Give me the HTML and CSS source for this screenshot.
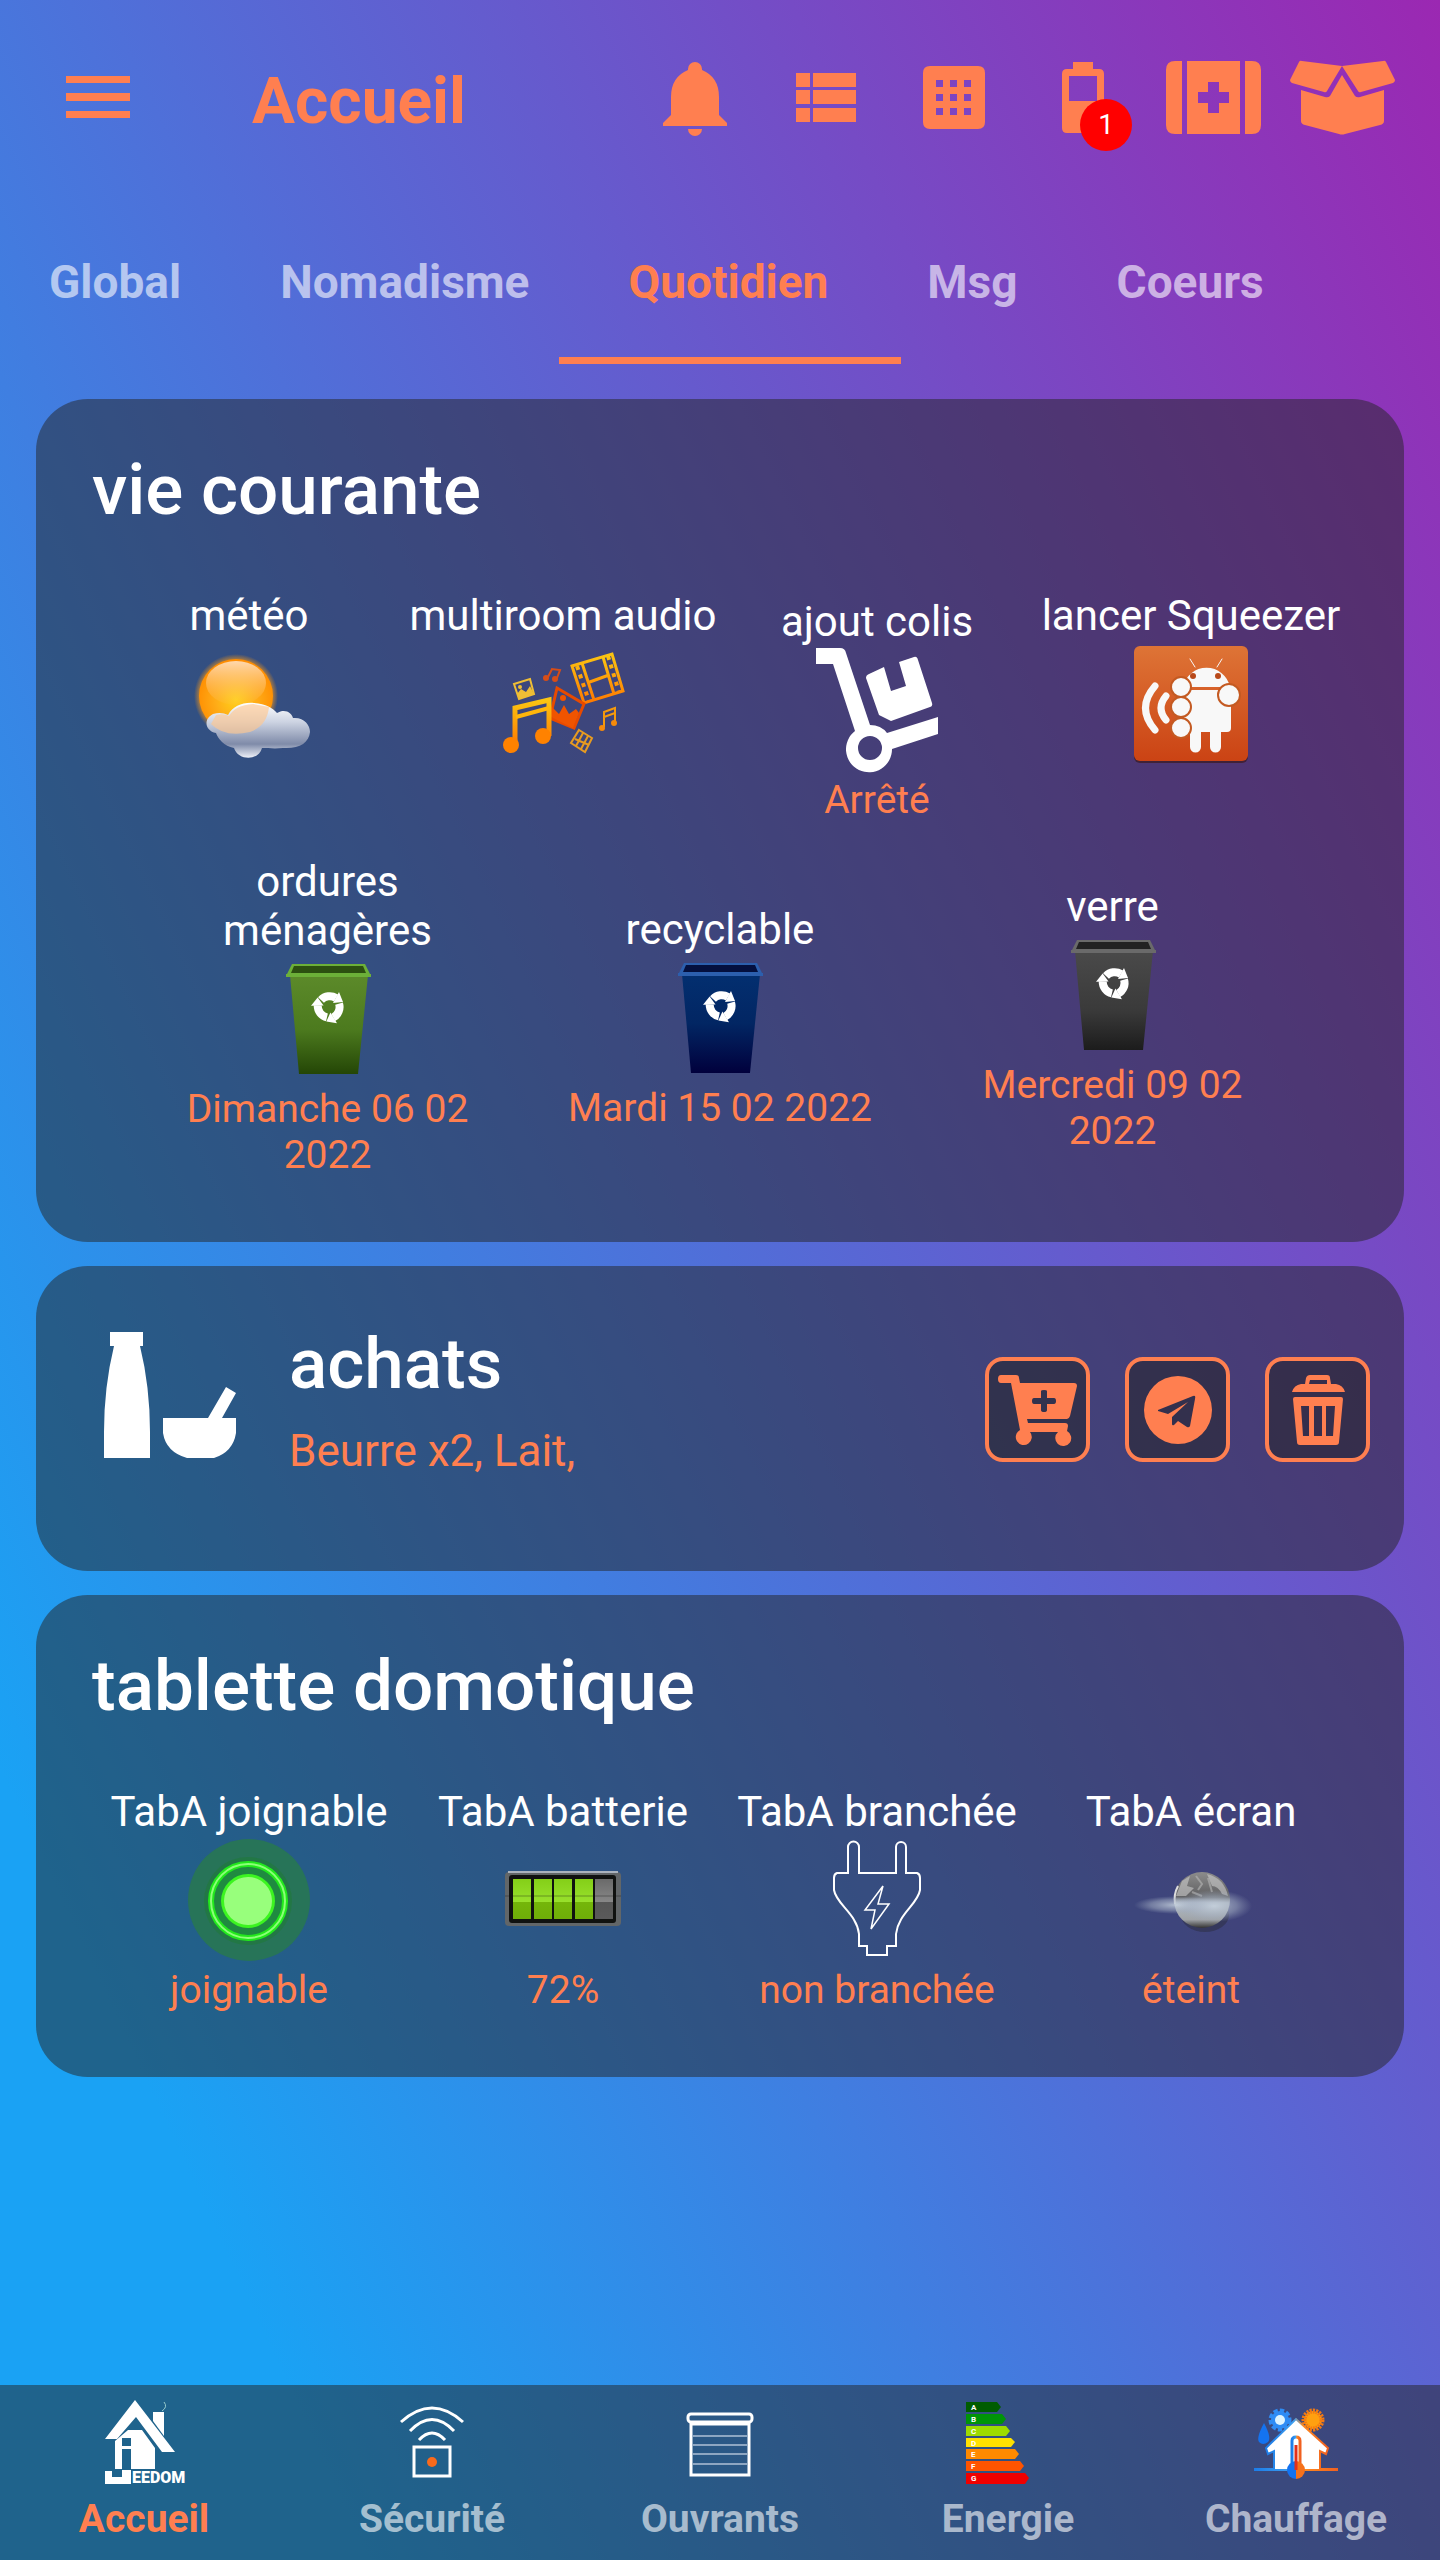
FILE: index.html
```html
<!DOCTYPE html>
<html lang="fr">
<head>
<meta charset="utf-8">
<meta name="viewport" content="width=device-width, initial-scale=1">
<title>Accueil</title>
<link rel="stylesheet" href="styles.css">
</head>
<body>
<svg class="defs" width="0" height="0" aria-hidden="true">
  <defs>
    <linearGradient id="binGreen" x1="0" y1="0" x2="0" y2="1"><stop offset="0" stop-color="#5c8a2a"/><stop offset=".55" stop-color="#4c7a1e"/><stop offset="1" stop-color="#244606"/></linearGradient>
    <linearGradient id="binBlue" x1="0" y1="0" x2="0" y2="1"><stop offset="0" stop-color="#032f70"/><stop offset=".5" stop-color="#022663"/><stop offset="1" stop-color="#01003c"/></linearGradient>
    <linearGradient id="binGrey" x1="0" y1="0" x2="0" y2="1"><stop offset="0" stop-color="#4a4a4a"/><stop offset=".6" stop-color="#3a3a3a"/><stop offset="1" stop-color="#1c1c1c"/></linearGradient>
    <symbol id="bin" viewBox="0 0 120 131">
      <path d="M22 20H100L90 119H31Z" fill="var(--bin-fill)"/>
      <path d="M24 9H97L103 21H18Z" fill="var(--bin-rim)"/>
      <path d="M26 11H95L98 18H23Z" fill="var(--bin-inside)"/>
      <path d="M18 19H103V22H18Z" fill="var(--bin-rim)"/>
      <g>
        <g id="arrow"><path d="M53 45A12 12 0 0 1 68 43" fill="none" stroke="#fff" stroke-width="8"/><path d="M71 37L75 47L65 48Z" fill="#fff"/></g>
        <use href="#arrow" transform="rotate(120 61 52)"/>
        <use href="#arrow" transform="rotate(240 61 52)"/>
      </g>
    </symbol>
    <radialGradient id="sun" cx=".5" cy=".55" r=".55"><stop offset="0" stop-color="#ffd21a"/><stop offset=".5" stop-color="#ffac17"/><stop offset="1" stop-color="#ff8c00"/></radialGradient>
    <linearGradient id="shine" x1="0" y1="0" x2="0" y2="1"><stop offset="0" stop-color="#ffe0c0" stop-opacity=".9"/><stop offset="1" stop-color="#ffc060" stop-opacity=".1"/></linearGradient>
    <linearGradient id="cloud" x1="0" y1="0" x2="0" y2="1"><stop offset="0" stop-color="#fff"/><stop offset=".35" stop-color="#ccd3e2"/><stop offset=".75" stop-color="#7f8ba9"/><stop offset="1" stop-color="#eef1f8"/></linearGradient>
    <radialGradient id="glow"><stop offset=".84" stop-color="#ff9a10" stop-opacity=".7"/><stop offset="1" stop-color="#ff9a10" stop-opacity="0"/></radialGradient>
    <linearGradient id="media" x1="0" y1="0" x2="0" y2="1"><stop offset="0" stop-color="#fbc512"/><stop offset="1" stop-color="#ff7a00"/></linearGradient>
    <linearGradient id="app" x1="0" y1="0" x2="0" y2="1"><stop offset="0" stop-color="#de7436"/><stop offset="1" stop-color="#cb4314"/></linearGradient>
    <linearGradient id="cell" x1="0" y1="0" x2="0" y2="1"><stop offset="0" stop-color="#84cf18"/><stop offset=".57" stop-color="#98e02c"/><stop offset=".58" stop-color="#74b60a"/><stop offset="1" stop-color="#6fae08"/></linearGradient>
    <linearGradient id="cellOff" x1="0" y1="0" x2="0" y2="1"><stop offset="0" stop-color="#6a6a6a"/><stop offset=".57" stop-color="#878787"/><stop offset=".58" stop-color="#565656"/><stop offset="1" stop-color="#5a5a5a"/></linearGradient>
    <linearGradient id="moon" x1="0" y1="0" x2="0" y2="1"><stop offset="0" stop-color="#8c8c8c"/><stop offset=".45" stop-color="#5e5e60"/><stop offset=".55" stop-color="#b4bcc4"/><stop offset=".85" stop-color="#a0a4a8"/><stop offset="1" stop-color="#333"/></linearGradient>
    <radialGradient id="mist"><stop offset="0" stop-color="#c6d2de" stop-opacity=".85"/><stop offset=".6" stop-color="#a8b4c6" stop-opacity=".5"/><stop offset="1" stop-color="#98a4ba" stop-opacity="0"/></radialGradient>
    <linearGradient id="house" x1="0" y1="0" x2="1" y2="0"><stop offset="0" stop-color="#1c7ce8"/><stop offset=".45" stop-color="#3fa0f0"/><stop offset=".6" stop-color="#ff8a20"/><stop offset="1" stop-color="#f06020"/></linearGradient>
  </defs>
</svg>

<header class="topbar">
  <button class="icon-button menu" type="button" aria-label="Menu">
    <svg width="64" height="48" viewBox="0 0 64 48"><path d="M0 0H64V7H0ZM0 17H64V25H0ZM0 35H64V42H0Z"/></svg>
  </button>
  <h1 class="topbar-title">Accueil</h1>
  <div class="actions">
    <button class="icon-button action" type="button" aria-label="Notifications">
      <svg width="130" height="90" viewBox="0 0 130 90"><path d="M60 15V14A7 7 0 0 1 74 14V15Q91 22 91 42V60L99 68V71H35V68L43 60V42Q43 22 60 15ZM60 74H74A7 7 0 0 1 60 74Z"/></svg>
    </button>
    <button class="icon-button action" type="button" aria-label="Liste">
      <svg width="130" height="90" viewBox="0 0 130 90"><path d="M38 18H52V32H38ZM55 18H98V32H55ZM38 35H52V49H38ZM55 35H98V49H55ZM38 53H52V67H38ZM55 53H98V67H55Z"/></svg>
    </button>
    <button class="icon-button action" type="button" aria-label="Clavier">
      <svg width="130" height="90" viewBox="0 0 130 90"><path fill-rule="evenodd" d="M42 11H90Q97 11 97 18V67Q97 74 90 74H42Q35 74 35 67V18Q35 11 42 11ZM48 25V32H55V25ZM62 25V32H69V25ZM76 25V32H83V25ZM48 39V46H55V39ZM62 39V46H69V39ZM76 39V46H83V39ZM48 53V60H55V53ZM62 53V60H69V53ZM76 53V60H83V53Z"/></svg>
    </button>
    <button class="icon-button action" type="button" aria-label="Batteries, 1 alerte">
      <svg width="130" height="90" viewBox="0 0 130 90"><path fill-rule="evenodd" d="M55 7H75V14H81Q86 14 86 19V73Q86 78 81 78H49Q44 78 44 73V19Q44 14 49 14H55ZM51 21V46H79V21Z"/></svg>
      <span class="badge">1</span>
    </button>
    <button class="icon-button action" type="button" aria-label="Santé">
      <svg width="130" height="90" viewBox="0 0 130 90"><path fill-rule="evenodd" d="M27 6H34V79H27Q18 79 18 70V15Q18 6 27 6ZM97 6H104Q113 6 113 15V70Q113 79 104 79H97ZM39 6H92V79H39ZM60 27V37H50V48H60V58H71V48H81V37H71V27Z"/></svg>
    </button>
    <button class="icon-button action" type="button" aria-label="Colis">
      <svg width="130" height="90" viewBox="0 0 130 90"><path d="M24 6L64 11L49 36Q48 38 46 37L14 28Q12 27 12 25L21 7Q22 5 24 6ZM105 6L64 11L80 36Q81 38 83 37L115 28Q117 27 117 25L108 7Q107 5 105 6ZM64 20L77 41Q79 43 82 42L106 35V66Q106 69 102 70L67 79Q64 80 61 79L27 70Q23 69 23 66V35L47 42Q50 43 52 41Z"/></svg>
    </button>
  </div>
</header>

<nav class="tabs" aria-label="Sections">
  <a class="tab" href="#global">Global</a>
  <a class="tab" href="#nomadisme">Nomadisme</a>
  <a class="tab tab-active" href="#quotidien" aria-current="page">Quotidien</a>
  <a class="tab" href="#msg">Msg</a>
  <a class="tab" href="#coeurs">Coeurs</a>
</nav>

<main class="content">
  <section class="card">
    <h2 class="card-title">vie courante</h2>
    <div class="tiles">
      <div class="tile tile-plain">
        <span class="tile-label">météo</span>
        <svg class="tile-icon" viewBox="0 0 120 131">
          <circle cx="47" cy="56" r="42" fill="url(#glow)"/>
          <circle cx="47" cy="56" r="37" fill="url(#sun)"/>
          <ellipse cx="47" cy="43" rx="30" ry="22" fill="url(#shine)"/>
          <path d="M24 74C30 72 35 73 39 75C44 66 54 62 65 63C77 64 84 68 88 73C96 68 103 73 104 78C115 77 121 85 121 92C120 103 110 109 94 108C85 109 79 108 73 108C70 121 49 121 45 108C35 106 29 99 27 93C16 91 14 79 24 74Z" fill="url(#cloud)"/>
          <path d="M27 75Q34 73 40 76Q46 65 64 64L80 67Q78 86 61 92Q36 98 22 84Z" fill="#ffc890" opacity=".65"/>
        </svg>
      </div>
      <div class="tile tile-plain">
        <span class="tile-label">multiroom audio</span>
        <svg class="tile-icon" viewBox="0 0 120 131" fill="none">
          <g stroke="url(#media)" stroke-width="3"><path d="M69 26L109 14L120 51L81 63Z"/><path d="M79 23L91 60M100 17L111 54M84 43L106 35"/><path stroke-width="4" stroke-dasharray="4 5" d="M74 26L86 61M105 16L116 52"/></g>
          <path d="M54 48L81 64L71 88L47 78Z" stroke="#e84a00" stroke-width="3"/>
          <path d="M49 67L56 74L61 65L66 74L73 69L76 73L70 88L48 77Z" fill="#f05400"/><circle cx="60" cy="58" r="3" fill="#f05400"/>
          <path d="M12 105V68L46 60V96" stroke="url(#media)" stroke-width="5"/><path d="M13 77L46 68" stroke="#ffb60c" stroke-width="4"/>
          <g fill="#ff8200"><circle cx="8" cy="105" r="8"/><circle cx="40" cy="96" r="8"/></g>
          <path d="M11 44L27 39L31 54L16 59Z" stroke="#efbe35" stroke-width="2"/><path d="M14 54L18 49L23 52L27 46L31 54L16 59Z" fill="#efbe35"/><circle cx="17" cy="47" r="2" fill="#efbe35"/>
          <path d="M45 37L49 29L57 30L54 38" stroke="#d84d17" stroke-width="2"/><g fill="#d84d17"><circle cx="43" cy="38" r="3"/><circle cx="52" cy="39" r="3"/></g>
          <path d="M101 87V72L112 68V82M101 77L112 73" stroke="#f59a0c" stroke-width="2"/><g fill="#f58a0c"><circle cx="99" cy="88" r="3"/><circle cx="111" cy="83" r="3"/></g>
          <path d="M76 90L89 98L82 112L68 103ZM80 93L73 106M85 96L78 109M72 99L86 105" stroke="#e79b20" stroke-width="2"/>
        </svg>
      </div>
      <div class="tile">
        <span class="tile-label">ajout colis</span>
        <svg class="tile-icon" viewBox="0 0 120 131" fill="#fff">
          <path fill-rule="evenodd" d="M-1 2H23Q28 2 29 7L53 79Q64 79 70 87L121 71V88L75 103A23 23 0 1 1 38 85L16 18H-1ZM53 90A12 12 0 1 0 53 114A12 12 0 1 0 53 90Z"/>
          <path d="M52 28L67 21L74 45L89 40L82 16L97 11Q100 10 101 14L115 57Q116 60 113 61L74 75L62 69L49 32Q49 29 52 28Z"/>
        </svg>
        <span class="tile-value">Arrêté</span>
      </div>
      <div class="tile tile-plain">
        <span class="tile-label">lancer Squeezer</span>
        <svg class="tile-icon" viewBox="-1 0 120 131">
          <rect x="2" y="9" width="114" height="114" rx="6" fill="#3a1a20" opacity=".7"/>
          <rect x="2" y="6" width="114" height="115" rx="6" fill="url(#app)"/>
          <g fill="#f8f8f8">
            <path d="M51 47A24 24 0 0 1 98 47ZM52 50H99V88Q99 92 95 92H89V107A5 5 0 0 1 78 107V92H69V107A5 5 0 0 1 58 107V92H52Z"/>
            <g stroke="#c45a22" stroke-width="2"><circle cx="49" cy="47" r="10"/><circle cx="49" cy="67" r="10"/><circle cx="49" cy="88" r="10"/><circle cx="97" cy="55" r="11"/></g>
          </g>
          <g fill="none" stroke="#f8f8f8" stroke-linecap="round"><path d="M58 19L63 27M90 19L85 27" stroke-width="1"/><path d="M23 46Q4 68 23 90M34 56Q24 68 34 80" stroke-width="7"/></g>
          <g fill="#b8491a"><circle cx="61" cy="36" r="3"/><circle cx="86" cy="36" r="3"/></g>
        </svg>
      </div>
    </div>
    <div class="tiles">
      <div class="tile">
        <span class="tile-label">ordures ménagères</span>
        <svg class="tile-icon bin-green"><use href="#bin"/></svg>
        <span class="tile-value">Dimanche 06 02 2022</span>
      </div>
      <div class="tile">
        <span class="tile-label">recyclable</span>
        <svg class="tile-icon bin-blue"><use href="#bin"/></svg>
        <span class="tile-value">Mardi 15 02 2022</span>
      </div>
      <div class="tile">
        <span class="tile-label">verre</span>
        <svg class="tile-icon bin-grey"><use href="#bin"/></svg>
        <span class="tile-value">Mercredi 09 02 2022</span>
      </div>
    </div>
  </section>

  <section class="card shopping">
    <svg class="shopping-icon" width="133" height="126" viewBox="0 0 133 126" fill="#fff"><path d="M6 0H39V14H36Q46 55 46 100V126H0V100Q0 55 10 14H6ZM59 86H104L122 55L132 61L118 86H132V101Q129 120 110 126H83Q62 120 59 101Z"/></svg>
    <div class="shopping-text">
      <h2 class="card-title">achats</h2>
      <p class="shopping-list">Beurre x2, Lait,</p>
    </div>
    <div class="shopping-actions">
      <button class="square-button" type="button" aria-label="Ajouter au panier">
        <svg viewBox="4 4 97 97"><path fill-rule="evenodd" d="M16 18H31Q34 18 34 21L35 26H89Q92 26 92 29L85 59Q84 62 82 62H42L43 66H80Q83 66 83 69L82 74A8 8 0 1 1 73 75H45A8 8 0 1 1 35 73L26 26H16Q13 26 13 22Q13 18 16 18ZM56 34V41H49Q47 41 47 44Q47 47 49 47H56V53Q56 55 59 55Q62 55 62 53V47H69Q71 47 71 44Q71 41 69 41H62V34Q62 33 59 33Q56 33 56 34Z"/></svg>
      </button>
      <button class="square-button" type="button" aria-label="Envoyer">
        <svg viewBox="4 4 97 97"><path fill-rule="evenodd" d="M53 19A34 34 0 1 0 53 87A34 34 0 1 0 53 19ZM33 53L68 39Q71 38 70 42L65 69Q64 71 62 70L53 64L49 68Q47 69 47 67V60L63 45L43 57L33 54Z"/></svg>
      </button>
      <button class="square-button" type="button" aria-label="Vider la liste">
        <svg viewBox="4 4 97 97"><path fill-rule="evenodd" d="M40 27L41 21Q42 18 45 18H62Q65 18 65 21L66 27H71Q78 28 80 35H27Q29 28 36 27ZM44 27H62V23H45ZM30 40H76Q78 40 78 42L74 85Q74 88 71 88H35Q32 88 32 85L28 42Q28 40 30 40ZM36 49L38 79H44V49ZM49 49V79H57V49ZM61 49V79H68L70 49Z"/></svg>
      </button>
    </div>
  </section>

  <section class="card">
    <h2 class="card-title">tablette domotique</h2>
    <div class="tiles">
      <div class="tile">
        <span class="tile-label">TabA joignable</span>
        <svg class="tile-icon" viewBox="0 0 120 131">
          <circle cx="60" cy="64" r="61" fill="#277458"/>
          <circle cx="59" cy="65" r="44" fill="#1f7a38" opacity=".6"/>
          <circle cx="59" cy="65" r="37" fill="#1f8a40" stroke="#22e81c" stroke-width="6"/>
          <circle cx="59" cy="65" r="37" fill="none" stroke="#8cff78" stroke-width="2"/>
          <circle cx="59" cy="65" r="27" fill="#3cf520"/><circle cx="59" cy="65" r="24" fill="#98ff7c"/>
        </svg>
        <span class="tile-value">joignable</span>
      </div>
      <div class="tile">
        <span class="tile-label">TabA batterie</span>
        <svg class="tile-icon" viewBox="0 0 120 131">
          <rect x="2" y="36" width="116" height="54" rx="4" fill="#626668"/><path d="M5 36H115" stroke="#aab2bc" stroke-width="2"/>
          <rect x="6" y="39" width="107" height="48" rx="3" fill="#101210"/>
          <g fill="url(#cell)"><rect x="10" y="43" width="18" height="40"/><rect x="31" y="43" width="18" height="40"/><rect x="51" y="43" width="18" height="40"/><rect x="72" y="43" width="18" height="40"/></g>
          <rect x="92" y="43" width="18" height="40" fill="url(#cellOff)"/>
          <path d="M2 60H118" stroke="#111" opacity=".35"/>
        </svg>
        <span class="tile-value">72%</span>
      </div>
      <div class="tile">
        <span class="tile-label">TabA branchée</span>
        <svg class="tile-icon" viewBox="-1 0 120 131" fill="none" stroke="#fff" stroke-width="2">
          <path d="M30 37V11A5 5 0 0 1 41 11V37H78V11A5 5 0 0 1 88 11V37H99Q102 38 102 42V54C100 68 80 78 78 98V110H69V119H49V110H41V98C39 78 18 68 16 54V42Q16 38 19 37Z"/>
          <path stroke-width="1.5" d="M65 50L60 68H71L53 93L57 74H47Z"/>
        </svg>
        <span class="tile-value">non branchée</span>
      </div>
      <div class="tile">
        <span class="tile-label">TabA écran</span>
        <svg class="tile-icon" viewBox="-1 0 120 131">
          <ellipse cx="73" cy="79" rx="24" ry="17" fill="#222" opacity=".35"/>
          <circle cx="70" cy="64" r="28" fill="url(#moon)"/>
          <path d="M75 38Q92 42 96 60L90 58Q86 50 80 50ZM50 45L58 40L55 50L62 52L54 60H44Z" fill="#ccc" opacity=".6"/>
          <path d="M64 40L70 48L66 54M76 42L80 56M60 56L70 60" stroke="#b8b8b8" stroke-width="2" fill="none" opacity=".6"/>
          <path d="M43 68A28 28 0 0 1 46 50" stroke="#ddd" stroke-width="2" fill="none"/>
          <ellipse cx="44" cy="69" rx="42" ry="9" fill="url(#mist)"/><ellipse cx="82" cy="70" rx="38" ry="16" fill="url(#mist)"/>
        </svg>
        <span class="tile-value">éteint</span>
      </div>
    </div>
  </section>
</main>

<nav class="bottom-nav" aria-label="Navigation principale">
  <a class="nav-item nav-active" href="#accueil" aria-current="page">
    <svg width="84" height="84" viewBox="0 0 84 84" fill="#fff">
      <path d="M33 0L73 52H60L34 17L15 39H3Z"/><path d="M51 12H62V36L51 21Z"/><path d="M60 11Q66 7 62 2" fill="none" stroke="#9cc" stroke-width="1"/>
      <path fill-rule="evenodd" d="M13 41L26 30H40L53 48V69H13ZM20 38V46H29V38ZM20 49V69H29V49Z"/><path d="M3 71H10V77H20V70H29V84H3Z"/>
      <text class="logo-text" x="30" y="83">EEDOM</text>
    </svg>
    <span>Accueil</span>
  </a>
  <a class="nav-item" href="#securite">
    <svg width="84" height="84" viewBox="0 0 84 84" fill="none" stroke="#fff" stroke-width="3">
      <path d="M11 22Q42 -6 73 22M20 31Q42 8 64 31M29 40Q42 26 55 40"/><rect x="24" y="47" width="36" height="29"/><circle cx="42" cy="62" r="5" fill="#f96a1c" stroke="none"/>
    </svg>
    <span>Sécurité</span>
  </a>
  <a class="nav-item" href="#ouvrants">
    <svg width="84" height="84" viewBox="0 0 84 84" fill="none" stroke="#fff" stroke-width="3">
      <rect x="10" y="14" width="64" height="8" rx="3"/><path d="M13 24V75H71V24Z"/><path d="M15 36H69M15 45H69M15 54H69M15 64H69" stroke="#b8c8dc" stroke-width="2" opacity=".7"/>
    </svg>
    <span>Ouvrants</span>
  </a>
  <a class="nav-item" href="#energie">
    <svg width="84" height="84" viewBox="6 0 84 84">
      <path fill="#005c00" d="M6 2H37L41 7L37 12H6Z"/><path fill="#009408" d="M6 14H42L46 19L42 24H6Z"/><path fill="#9edb00" d="M6 26H46L50 31L46 36H6Z"/><path fill="#ffe100" d="M6 38H51L55 42L51 47H6Z"/><path fill="#ff8a00" d="M6 49H55L59 54L55 59H6Z"/><path fill="#ff5400" d="M6 61H60L64 66L60 71H6Z"/><path fill="#f00000" d="M6 73H65L69 78L65 84H6Z"/>
      <g class="grade"><text x="11" y="10">A</text><text x="11" y="22">B</text><text x="11" y="34">C</text><text x="11" y="46">D</text><text x="11" y="57">E</text><text x="11" y="69">F</text><text x="11" y="81">G</text></g>
    </svg>
    <span>Energie</span>
  </a>
  <a class="nav-item" href="#chauffage">
    <svg width="84" height="84" viewBox="0 0 84 84">
      <circle cx="26" cy="20" r="9" fill="#2f8cf5" stroke="#2f8cf5" stroke-width="5" stroke-dasharray="4 2"/><circle cx="26" cy="20" r="5" fill="#dff4ff"/>
      <circle cx="59" cy="20" r="9" fill="#ffa010" stroke="#f47a12" stroke-width="5" stroke-dasharray="2 1"/>
      <path d="M10 23Q18 38 14 42Q9 46 5 42Q2 38 10 23Z" fill="#1473f0"/>
      <rect x="0" y="68" width="84" height="3" fill="url(#house)"/>
      <path d="M42 19L74 48L72 54L66 51V69H20V51L14 54L12 48Z" fill="#fff"/>
      <path d="M20 69V51L14 54L12 48L42 19L74 48L72 54L66 51V69" fill="none" stroke="url(#house)" stroke-width="2"/>
      <path d="M38 63V41Q38 37 42 37Q46 37 46 41V63" fill="#fff" stroke="url(#house)" stroke-width="3"/>
      <path d="M42 61A9 9 0 0 0 42 79Z" fill="#1473f0"/><path d="M42 61A9 9 0 0 1 42 79Z" fill="#f5721c"/><path d="M42 45V70" stroke="#e3301a" stroke-width="3"/>
    </svg>
    <span>Chauffage</span>
  </a>
</nav>
</body>
</html>
```
FILE: styles.css
```css
:root {
  --accent: #ff7f50;
  --panel: rgba(36, 36, 36, 0.5);
  --muted: rgba(255, 255, 255, 0.6);
}

* {
  box-sizing: border-box;
}

body {
  margin: 0;
  min-height: 100vh;
  display: flex;
  flex-direction: column;
  font-family: Roboto, "Noto Sans", sans-serif;
  color: #fff;
  background: linear-gradient(245deg, #9b28b2 0%, #1aa2f4 86%);
}

h1,
h2,
p {
  margin: 0;
}

button {
  font: inherit;
  color: inherit;
  cursor: pointer;
}

a {
  color: inherit;
  text-decoration: none;
}

svg {
  display: block;
  overflow: visible;
}

.defs {
  position: absolute;
}

/* Top bar */
.topbar {
  display: flex;
  align-items: center;
  height: 200px;
  padding: 0 32px 0 66px;
  color: var(--accent);
}

.icon-button {
  padding: 0;
  border: 0;
  background: none;
  color: var(--accent);
}

.icon-button svg {
  fill: currentColor;
}

.topbar-title {
  margin-left: 122px;
  padding-top: 4px;
  font-size: 64px;
  line-height: 76px;
  font-weight: 700;
}

.actions {
  display: flex;
  margin-left: auto;
}

.action {
  position: relative;
}

.badge {
  position: absolute;
  left: 62px;
  top: 44px;
  width: 52px;
  height: 52px;
  border-radius: 50%;
  background: #f00;
  color: #fff;
  font-size: 28px;
  line-height: 52px;
  text-align: center;
}

/* Section tabs */
.tabs {
  display: flex;
  gap: 1px;
  height: 164px;
}

.tab {
  position: relative;
  padding: 0 49px;
  font-size: 46px;
  line-height: 164px;
  font-weight: 700;
  color: var(--muted);
}

.tab-active {
  color: var(--accent);
}

.tab-active::after {
  content: "";
  position: absolute;
  left: -20px;
  right: -24px;
  bottom: 0;
  height: 7px;
  background: var(--accent);
}

/* Cards */
.content {
  display: flex;
  flex-direction: column;
  gap: 24px;
  padding: 35px 36px;
}

.card {
  display: flex;
  flex-direction: column;
  gap: 28px;
  padding: 50px 56px 64px;
  border-radius: 52px;
  background: var(--panel);
}

.card-title {
  font-size: 71px;
  line-height: 82px;
  font-weight: 500;
}

.card-title + .tiles {
  margin-top: 32px;
}

.tiles {
  display: flex;
  align-items: center;
  justify-content: space-evenly;
}

.tile {
  flex: 0 0 25%;
  display: flex;
  flex-direction: column;
  align-items: center;
  text-align: center;
}

.tile-plain {
  min-height: 238px;
}

.tile-label {
  font-size: 42px;
  line-height: 49px;
}

.tile-icon {
  width: 120px;
  height: 131px;
}

.tile-value {
  font-size: 39px;
  line-height: 46px;
  color: var(--accent);
}

.bin-green {
  --bin-fill: url(#binGreen);
  --bin-rim: #6cb038;
  --bin-inside: #2c5010;
}

.bin-blue {
  --bin-fill: url(#binBlue);
  --bin-rim: #2c5fae;
  --bin-inside: #04103f;
}

.bin-grey {
  --bin-fill: url(#binGrey);
  --bin-rim: #6a6a6a;
  --bin-inside: #222;
}

/* Shopping card */
.shopping {
  flex-direction: row;
  align-items: flex-start;
  gap: 52px;
  padding: 57px 34px 66px 68px;
}

.shopping-icon {
  margin-top: 9px;
}

.shopping-text {
  flex: 1;
}

.shopping-list {
  margin-top: 20px;
  padding-bottom: 28px;
  font-size: 44px;
  line-height: 52px;
  color: var(--accent);
}

.shopping-actions {
  display: flex;
  gap: 35px;
  margin-top: 34px;
}

.square-button {
  width: 105px;
  height: 105px;
  padding: 0;
  border: 4px solid var(--accent);
  border-radius: 18px;
  background: rgba(33, 33, 33, 0.5);
  color: var(--accent);
}

.square-button svg {
  width: 97px;
  height: 97px;
  fill: currentColor;
}

/* Bottom navigation */
.bottom-nav {
  display: flex;
  height: 175px;
  margin-top: auto;
  padding-top: 15px;
  background: var(--panel);
}

.nav-item {
  flex: 1;
  display: flex;
  flex-direction: column;
  align-items: center;
  gap: 12px;
  font-size: 39px;
  line-height: 46px;
  font-weight: 700;
  color: var(--muted);
}

.nav-active {
  color: var(--accent);
}

.logo-text {
  font-size: 16px;
  font-weight: 900;
}

.grade {
  fill: #fff;
  font-size: 8px;
}
```
